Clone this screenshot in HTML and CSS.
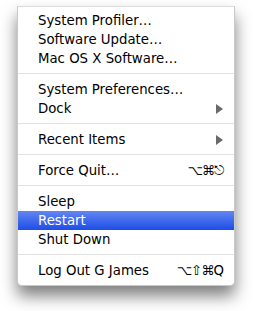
FILE: index.html
```html
<!DOCTYPE html>
<html lang="en">
<head>
    <meta charset="UTF-8">
    <title>Apple Menu</title>
    <link rel="stylesheet" href="styles.css">
</head>
<body>
    <div class="menu">
        <div class="item">System Profiler…</div>
        <div class="item">Software Update…</div>
        <div class="item">Mac OS X Software…</div>
        <div class="sep"></div>
        <div class="item">System Preferences…</div>
        <div class="item">Dock <span class="arrow"></span></div>
        <div class="sep"></div>
        <div class="item">Recent Items <span class="arrow"></span></div>
        <div class="sep"></div>
        <div class="item">Force Quit… <span class="keys">⌥⌘⎋</span></div>
        <div class="sep"></div>
        <div class="item">Sleep</div>
        <div class="item active">Restart</div>
        <div class="item">Shut Down</div>
        <div class="sep"></div>
        <div class="item">Log Out G James <span class="keys">⌥⇧⌘Q</span></div>
    </div>
</body>
</html>
```

FILE: styles.css
```css
body {
    margin: 0;
    min-height: 311px;
    background: #ffffff;
    font-family: "DejaVu Sans", sans-serif;
    font-size: 13.3px;
    color: #000;
}

.menu {
    margin: 6px 0 0 17px;
    width: 218px;
    box-sizing: border-box;
    padding: 4px 0 5px;
    background: #ffffff;
    border: 1px solid #c9c9c9;
    border-top-color: #dcdcdc;
    border-radius: 0 0 5px 5px;
    box-shadow: 0 10px 16px rgba(0, 0, 0, 0.5);
}

.item {
    display: flex;
    align-items: center;
    justify-content: space-between;
    height: 19px;
    padding: 0 11px 0 20px;
}

.item.active {
    background: linear-gradient(to bottom, #6286f1, #1e4de6);
    color: #ffffff;
}

.sep {
    height: 1px;
    margin: 5px 0 6px;
    background: #e2e2e2;
}

.arrow {
    width: 0;
    height: 0;
    border-top: 5px solid transparent;
    border-bottom: 5px solid transparent;
    border-left: 7px solid #6a6a6a;
}

.keys {
    letter-spacing: -1px;
}
```
